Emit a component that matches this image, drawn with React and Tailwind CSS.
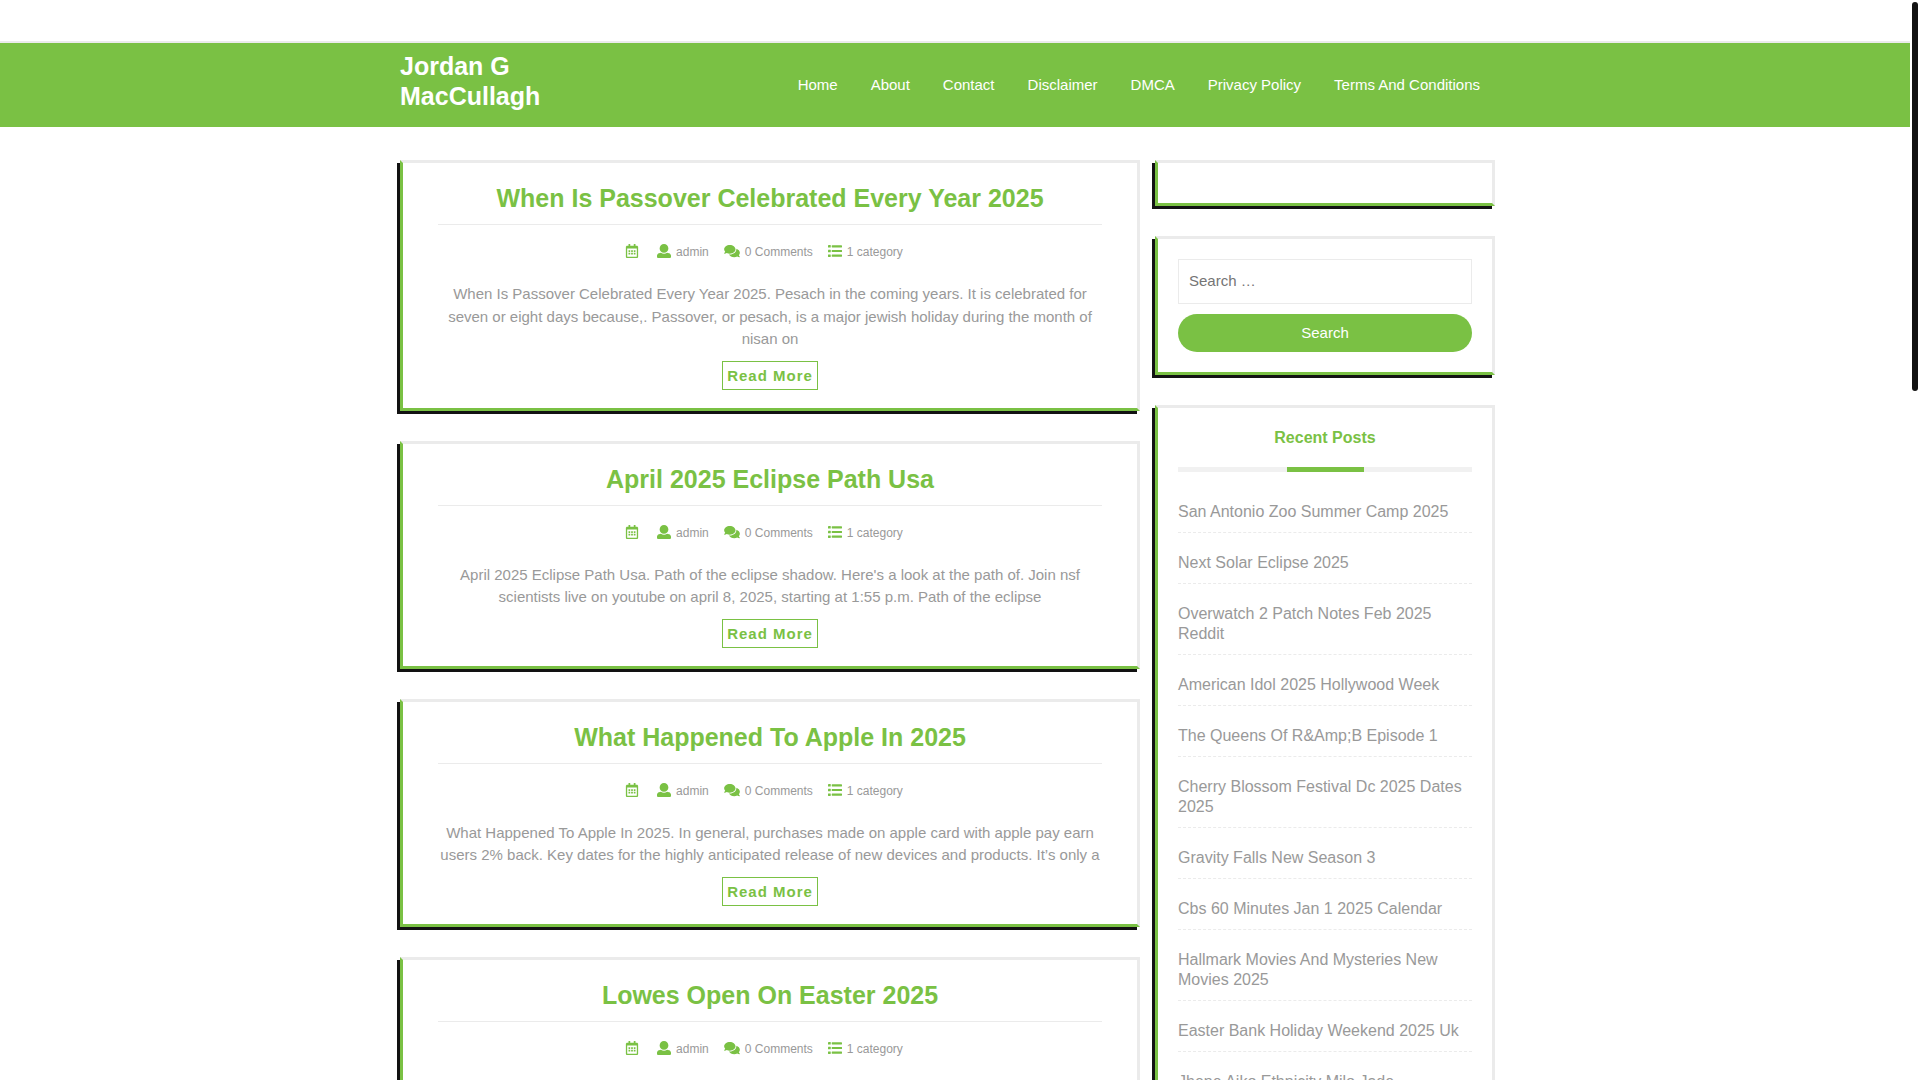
import { FaRegCalendarAlt, FaComments } from "react-icons/fa";

const navLinks = ["Home", "About", "Contact", "Disclaimer", "DMCA", "Privacy Policy", "Terms And Conditions"];

const posts = [
  {
    title: "When Is Passover Celebrated Every Year 2025",
    excerpt:
      "When Is Passover Celebrated Every Year 2025. Pesach in the coming years. It is celebrated for seven or eight days because,. Passover, or pesach, is a major jewish holiday during the month of nisan on",
  },
  {
    title: "April 2025 Eclipse Path Usa",
    excerpt:
      "April 2025 Eclipse Path Usa. Path of the eclipse shadow. Here's a look at the path of. Join nsf scientists live on youtube on april 8, 2025, starting at 1:55 p.m. Path of the eclipse",
  },
  {
    title: "What Happened To Apple In 2025",
    excerpt:
      "What Happened To Apple In 2025. In general, purchases made on apple card with apple pay earn users 2% back. Key dates for the highly anticipated release of new devices and products. It’s only a",
  },
  { title: "Lowes Open On Easter 2025", excerpt: "" },
];

const recentPosts = [
  "San Antonio Zoo Summer Camp 2025",
  "Next Solar Eclipse 2025",
  "Overwatch 2 Patch Notes Feb 2025 Reddit",
  "American Idol 2025 Hollywood Week",
  "The Queens Of R&Amp;B Episode 1",
  "Cherry Blossom Festival Dc 2025 Dates 2025",
  "Gravity Falls New Season 3",
  "Cbs 60 Minutes Jan 1 2025 Calendar",
  "Hallmark Movies And Mysteries New Movies 2025",
  "Easter Bank Holiday Weekend 2025 Uk",
  "Jhene Aiko Ethnicity Milo Jade",
];

function UserIcon({ className }) {
  return (
    <svg viewBox="0 0 512 512" fill="currentColor" className={className} aria-hidden="true">
      <path d="M256 0c88.366 0 160 71.634 160 160s-71.634 160-160 160S96 248.366 96 160 167.634 0 256 0zm183.283 333.821l-71.313-17.828c-74.923 53.89-165.738 41.864-223.94 0l-71.313 17.828C29.981 344.505 0 382.903 0 426.955V464c0 26.51 21.49 48 48 48h416c26.51 0 48-21.49 48-48v-37.045c0-44.052-29.981-82.45-72.717-93.134z" />
    </svg>
  );
}

function ListIcon({ className }) {
  return (
    <svg viewBox="0 0 512 512" fill="currentColor" className={className} aria-hidden="true">
      {[40, 210, 380].map((y) => (
        <g key={y}>
          <rect x="0" y={y} width="100" height="92" rx="14" />
          <rect x="136" y={y + 6} width="376" height="80" rx="14" />
        </g>
      ))}
    </svg>
  );
}

function Panel({ as: Tag = "section", className = "", children }) {
  return (
    <Tag
      className={`border-[3px] border-t-[#ebebeb] border-r-[#ebebeb] border-b-[#7ac144] border-l-[#7ac144] bg-white shadow-[-3px_3px_0_#121212] ${className}`}
    >
      {children}
    </Tag>
  );
}

function PostCard({ post }) {
  return (
    <Panel as="article" className="px-[35px] pt-[18px] pb-[18px] text-center">
      <h2 className="border-b border-[#ebebeb] pb-2 text-[25px] leading-[35px] font-bold text-[#7ac144]">
        <a href="#">{post.title}</a>
      </h2>
      <div className="mt-[17px] flex h-5 items-center justify-center gap-[15px] pr-3 text-xs text-[#999]">
        <span className="mr-[3px] flex items-center">
          <FaRegCalendarAlt className="mb-[2px] h-[14px] w-auto text-[#7ac144]" />
        </span>
        <span className="flex items-center gap-[5px]">
          <UserIcon className="mb-[2px] size-[14px] text-[#7ac144]" />
          <a href="#">admin</a>
        </span>
        <span className="flex items-center gap-[5px]">
          <FaComments className="mb-[2px] h-[14px] w-4 text-[#7ac144]" />
          0 Comments
        </span>
        <span className="flex items-center gap-[5px]">
          <ListIcon className="mb-[2px] size-[14px] text-[#7ac144]" />
          1 category
        </span>
      </div>
      <p className="mt-[21px] min-h-[45px] text-[15px] leading-normal text-[#999]">{post.excerpt}</p>
      {post.excerpt && (
        <a
          href="#"
          className="mt-[10px] inline-block border border-[#7ac144] px-1 text-[15px] leading-[27px] font-bold tracking-[1px] text-[#7ac144]"
        >
          Read More
        </a>
      )}
    </Panel>
  );
}

export default function App() {
  return (
    <div className="relative h-screen overflow-hidden bg-white pr-[10px] font-['Liberation_Sans',Arial,sans-serif]">
      <header className="mt-[41px] border-t-2 border-[#ebebeb] bg-[#7ac144]">
        <div className="mx-auto flex max-w-[1140px] items-center justify-between pr-[45px] pl-[15px] text-white">
          <h1 className="w-1/5 pt-2 pb-4 text-[25px] leading-[30px] font-bold">
            <a href="#">Jordan G MacCullagh</a>
          </h1>
          <nav className="flex gap-[33px] text-[15px] whitespace-nowrap">
            {navLinks.map((link) => (
              <a key={link} href="#">
                {link}
              </a>
            ))}
          </nav>
        </div>
      </header>

      <div className="mx-auto mt-[33px] flex max-w-[1140px] items-start gap-[15px] pr-[30px] pl-[15px]">
        <main className="flex flex-1 flex-col gap-[30px]">
          {posts.map((post) => (
            <PostCard key={post.title} post={post} />
          ))}
        </main>

        <aside className="flex w-[340px] flex-col gap-[30px]">
          <Panel className="p-5" />

          <Panel className="p-5">
            <form className="flex flex-col gap-[10px] text-[15px]" onSubmit={(e) => e.preventDefault()}>
              <input
                type="search"
                aria-label="Search"
                placeholder="Search …"
                className="h-[45px] w-full border border-[#ebebeb] px-[10px] pb-[2px] placeholder:text-[#757575]"
              />
              <button type="submit" className="h-[38px] w-full rounded-full bg-[#7ac144] text-white">
                Search
              </button>
            </form>
          </Panel>

          <Panel className="p-5">
            <h3 className="text-center text-base leading-5 font-bold text-[#7ac144]">Recent Posts</h3>
            <div className="mt-[19px] h-[5px] bg-[#f1f1f1]">
              <div className="mx-auto h-full w-[77px] bg-[#7ac144]" />
            </div>
            <ul className="mt-[30px] flex flex-col gap-5">
              {recentPosts.map((title) => (
                <li key={title} className="border-b border-dashed border-[#ebebeb] pb-[10px] text-base leading-5 text-[#999]">
                  <a href="#">{title}</a>
                </li>
              ))}
            </ul>
          </Panel>
        </aside>
      </div>

      {/* scroll thumb */}
      <div className="absolute top-[2px] right-[2px] h-[36%] w-[6px] rounded-full bg-[#121212]" />
    </div>
  );
}
